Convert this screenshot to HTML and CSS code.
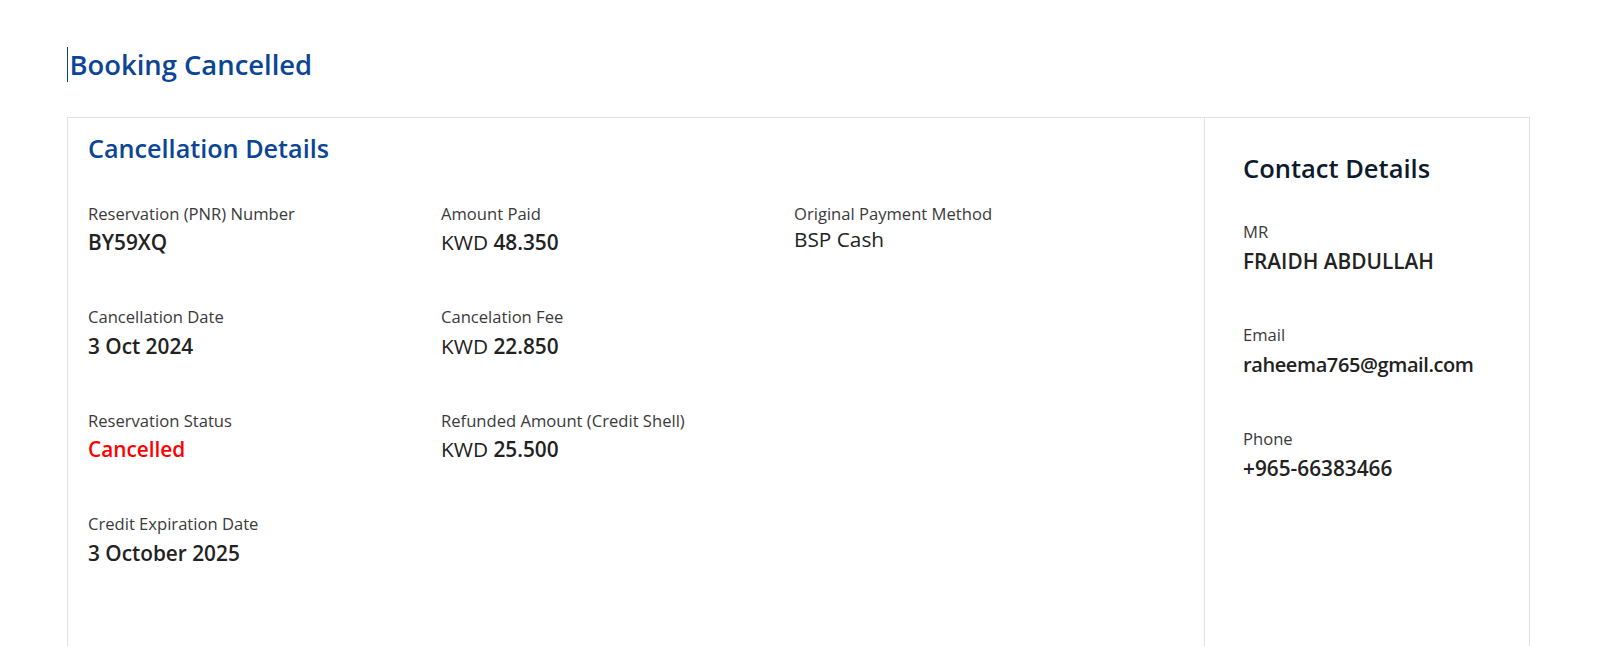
FILE: index.html
```html
<!DOCTYPE html>
<html lang="en">
<head>
<meta charset="utf-8">
<title>Booking Cancelled</title>
<link rel="stylesheet" href="styles.css">
</head>
<body>
<main class="page">
  <h1 class="page-title">Booking Cancelled</h1>
  <section class="card">
    <div class="card-main">
      <h2 class="section-title">Cancellation Details</h2>
      <div class="details-grid">
        <div class="field">
          <span class="field-label">Reservation (PNR) Number</span>
          <span class="field-value">BY59XQ</span>
        </div>
        <div class="field">
          <span class="field-label">Amount Paid</span>
          <span class="field-value"><span class="currency">KWD</span> 48.350</span>
        </div>
        <div class="field">
          <span class="field-label">Original Payment Method</span>
          <span class="field-value field-value--plain">BSP Cash</span>
        </div>

        <div class="field">
          <span class="field-label">Cancellation Date</span>
          <span class="field-value">3 Oct 2024</span>
        </div>
        <div class="field">
          <span class="field-label">Cancelation Fee</span>
          <span class="field-value"><span class="currency">KWD</span> 22.850</span>
        </div>
        <div class="field field--empty"></div>

        <div class="field">
          <span class="field-label">Reservation Status</span>
          <span class="field-value field-value--danger">Cancelled</span>
        </div>
        <div class="field">
          <span class="field-label">Refunded Amount (Credit Shell)</span>
          <span class="field-value"><span class="currency">KWD</span> 25.500</span>
        </div>
        <div class="field field--empty"></div>

        <div class="field">
          <span class="field-label">Credit Expiration Date</span>
          <span class="field-value">3 October 2025</span>
        </div>
      </div>
    </div>
    <aside class="card-side">
      <h2 class="side-title">Contact Details</h2>
      <div class="contact-list">
        <div class="field field--contact">
          <span class="field-label">MR</span>
          <span class="field-value">FRAIDH ABDULLAH</span>
        </div>
        <div class="field field--contact">
          <span class="field-label">Email</span>
          <span class="field-value field-value--email">raheema765@gmail.com</span>
        </div>
        <div class="field field--contact">
          <span class="field-label">Phone</span>
          <span class="field-value">+965-66383466</span>
        </div>
      </div>
    </aside>
  </section>
</main>
</body>
</html>
```
FILE: styles.css
```css
* {
  box-sizing: border-box;
}

html, body {
  margin: 0;
  padding: 0;
  background: #ffffff;
}

body {
  font-family: "Open Sans", "Noto Sans", sans-serif;
  color: #222222;
}

.page {
  padding: 47px 0 0 67px;
  width: 1530px;
}

.page-title {
  margin: 0;
  font-size: 27.4px;
  line-height: 35px;
  font-weight: 600;
  color: #0b4595;
  border-left: 1.5px solid #0b3f88;
  padding-left: 1.5px;
}

.card {
  margin-top: 35px;
  display: flex;
  border: 1px solid #e2e2e2;
  min-height: 560px;
}

.card-main {
  flex: 1 1 auto;
  padding: 15px 20px 40px 20px;
  border-right: 1px solid #e2e2e2;
}

.card-side {
  flex: 0 0 324px;
  padding: 34px 20px 40px 38px;
}

.section-title {
  margin: 0;
  font-size: 25.2px;
  line-height: 30px;
  font-weight: 600;
  color: #0b4595;
}

.side-title {
  margin: 0;
  font-size: 25.5px;
  line-height: 32px;
  font-weight: 650;
  color: #0c1a2c;
}

.details-grid {
  margin-top: 40.5px;
  display: grid;
  grid-template-columns: repeat(3, 353px);
  row-gap: 52px;
}

.contact-list {
  margin-top: 37.5px;
  display: flex;
  flex-direction: column;
  gap: 51px;
}

.field {
  display: flex;
  flex-direction: column;
  gap: 5.5px;
}

.field--contact {
  gap: 6.5px;
}

.field-label {
  font-size: 16.6px;
  line-height: 20px;
  font-weight: 400;
  color: #3a3a3a;
}

.field-value {
  font-size: 20.8px;
  line-height: 26px;
  font-weight: 600;
  color: #222222;
}

.field-value--plain {
  font-weight: 400;
  margin-top: -3px;
}

.field-value--danger {
  color: #ff0000;
}

.field-value--email {
  font-size: 20px;
  letter-spacing: -0.4px;
}

.currency {
  font-weight: 400;
}
```
